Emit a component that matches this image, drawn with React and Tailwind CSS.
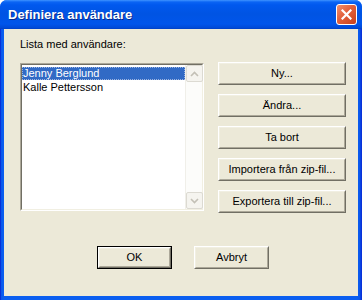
import React from "react";

const font = { fontFamily: '"Liberation Sans", Arial, sans-serif' };

function Btn({ children, w = "w-[128px]", def = false }) {
  const inner = (
    <div className="h-full w-full border border-t-[#ffffff] border-l-[#ffffff] border-b-[#716f64] border-r-[#716f64] bg-[#ece9d8]">
      <div className="h-full w-full border border-t-[#f1efe2] border-l-[#f1efe2] border-b-[#aca899] border-r-[#aca899] flex items-center justify-center text-[11px] leading-[13px] text-black">
        {children}
      </div>
    </div>
  );
  return (
    <div className={`${w} h-[23px] ${def ? "border border-black" : ""}`}>
      {inner}
    </div>
  );
}

function Chevron({ up }) {
  return (
    <svg width="9" height="6" viewBox="0 0 9 6">
      <path
        d={up ? "M1 5 L4.5 1.5 L8 5" : "M1 1 L4.5 4.5 L8 1"}
        fill="none"
        stroke="#c3c0b6"
        strokeWidth="1.6"
      />
    </svg>
  );
}

export default function App() {
  return (
    <div className="w-[362px] h-[300px] bg-white" style={font}>
      <div className="w-[362px] h-[300px] flex flex-col rounded-t-[7px] overflow-hidden bg-[#0055ea]">
        {/* Title bar */}
        <div className="h-[29px] shrink-0 flex items-center pl-[8px] pr-[5px] bg-[linear-gradient(to_bottom,#3f93ff_0px,#0a64f4_2px,#0058ee_5px,#0054e3_14px,#0055eb_24px,#0049d6_28px,#003dc0_29px)]">
          <div
            className="flex-1 text-white font-bold text-[13px] leading-[16px] pt-[1px]"
            style={{ textShadow: "1px 1px 0 #0a2a8a" }}
          >
            Definiera användare
          </div>
          <div className="w-[21px] h-[21px] rounded-[3px] border border-white bg-[linear-gradient(135deg,#f0906e_0%,#e2603b_45%,#c8401c_100%)] flex items-center justify-center">
            <svg width="11" height="11" viewBox="0 0 11 11">
              <path d="M1.5 1.5 L9.5 9.5 M9.5 1.5 L1.5 9.5" stroke="white" strokeWidth="2.2" strokeLinecap="square" />
            </svg>
          </div>
        </div>
        {/* Frame + client */}
        <div className="flex-1 flex px-[4px] pb-[4px] bg-[linear-gradient(to_right,#0831d9_0px,#0831d9_1px,#0a55ea_1px,#0a5ef0_3px,#0a5ef0_357px,#0a55ea_360px,#0831d9_361px)]">
          <div className="flex-1 flex flex-col bg-[#ece9d8] pl-[16px] pt-[9px]">
            <div className="h-[13px] text-[11px] leading-[13px] text-black">Lista med användare:</div>
            <div className="flex mt-[12px]">
              {/* listbox */}
              <div className="w-[184px] h-[148px] border border-t-[#aca899] border-l-[#aca899] border-b-white border-r-white">
                <div className="w-full h-full border border-t-[#716f64] border-l-[#716f64] border-b-[#f1efe2] border-r-[#f1efe2] bg-white flex">
                  <div className="flex-1 pt-[2px] text-[11px] leading-[13px]">
                    <div className="h-[13px] bg-[#316ac5] text-white pl-[1px] outline outline-1 outline-dotted outline-[#9db4e0] -outline-offset-1">
                      Jenny Berglund
                    </div>
                    <div className="h-[14px] pt-[1px] text-black pl-[1px]">Kalle Pettersson</div>
                  </div>
                  <div className="w-[17px] h-full flex flex-col bg-[#fcfcfa] border-l border-[#f0efe9]">
                    <div className="w-[17px] h-[17px] rounded-[2px] border border-[#dcdad2] bg-[#f5f4ef] flex items-center justify-center">
                      <Chevron up />
                    </div>
                    <div className="flex-1" />
                    <div className="w-[17px] h-[17px] rounded-[2px] border border-[#dcdad2] bg-[#f5f4ef] flex items-center justify-center">
                      <Chevron />
                    </div>
                  </div>
                </div>
              </div>
              <div className="ml-[14px] -mt-[1px] flex flex-col gap-[9px]">
                <Btn>Ny...</Btn>
                <Btn>Ändra...</Btn>
                <Btn>Ta bort</Btn>
                <Btn>Importera från zip-fil...</Btn>
                <Btn>Exportera till zip-fil...</Btn>
              </div>
            </div>
            <div className="flex mt-[33px] pl-[77px] gap-[22px]">
              <Btn w="w-[75px]" def>OK</Btn>
              <Btn w="w-[75px]">Avbryt</Btn>
            </div>
          </div>
        </div>
      </div>
    </div>
  );
}
